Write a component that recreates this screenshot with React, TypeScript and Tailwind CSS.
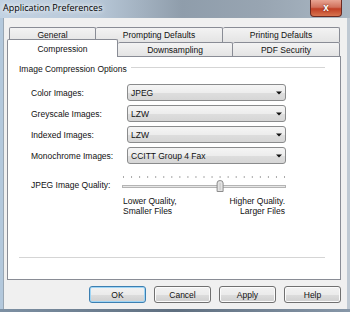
import React from 'react'

const rows = [
  { label: 'Color Images:', value: 'JPEG' },
  { label: 'Greyscale Images:', value: 'LZW' },
  { label: 'Indexed Images:', value: 'LZW' },
  { label: 'Monochrome Images:', value: 'CCITT Group 4 Fax' },
]

const backTabs = [
  { label: 'General', w: 'w-[87px]' },
  { label: 'Prompting Defaults', w: 'w-[127px]' },
  { label: 'Printing Defaults', w: 'w-[117px]' },
]

function Combo({ value }: { value: string }) {
  return (
    <div className="flex h-[17px] w-[159px] items-center justify-between rounded-[3px] border border-[#8a8b8c] bg-[linear-gradient(#f5f5f5_0%,#ededed_50%,#dedede_51%,#d6d6d6_100%)] pl-[3px] pr-[3px]">
      <span>{value}</span>
      <svg width="6" height="4" viewBox="0 0 6 4">
        <path d="M0 0.5h6L3 3.5z" fill="#111" />
      </svg>
    </div>
  )
}

// trackbar drawing, 21 ticks, thumb on 12
function Trackbar() {
  const ticks = Array.from({ length: 21 }, (_, i) => 1.5 + i * 8.05)
  const tx = ticks[12]
  return (
    <svg width="164" height="22" viewBox="0 0 164 22">
      {ticks.map((x, i) => (
        <rect key={i} x={x - 0.5} y={4} width={1} height={2} fill="#a9a9a9" />
      ))}
      <rect x={0.5} y={13.5} width={163} height={2} fill="#e6e6e6" stroke="#b4b4b4" strokeWidth={1} />
      <path
        d={`M${tx - 3} 19.5 V11 Q${tx - 3} 8.5 ${tx} 8.5 Q${tx + 3} 8.5 ${tx + 3} 11 V19.5 Z`}
        fill="#e3e3e3"
        stroke="#8c8c8c"
        strokeWidth={1}
      />
      <line x1={tx} y1={11} x2={tx} y2={18} stroke="#c4c4c4" strokeWidth={1} />
    </svg>
  )
}

function Button({ label, focused }: { label: string; focused?: boolean }) {
  return (
    <div
      className={
        focused
          ? 'flex h-[17px] w-[57px] items-center justify-center rounded-[3px] border border-[#3c7fb1] bg-[linear-gradient(#f2f2f2_0%,#ebebeb_50%,#dddddd_51%,#cfcfcf_100%)] shadow-[inset_0_0_0_1px_#9fd5f5]'
          : 'flex h-[17px] w-[57px] items-center justify-center rounded-[3px] border border-[#707070] bg-[linear-gradient(#f2f2f2_0%,#ebebeb_50%,#dddddd_51%,#cfcfcf_100%)] shadow-[inset_0_0_0_1px_#fbfbfb]'
      }
    >
      {label}
    </div>
  )
}

export default function App() {
  return (
    <div className="flex h-[312px] w-[350px] flex-col overflow-hidden font-['Liberation_Sans',Arial,sans-serif] text-[8.5px] leading-[12px] text-[#111]">
      {/* title bar */}
      <div className="flex h-[18px] items-start justify-between bg-[linear-gradient(90deg,#c3d3e3_0%,#b7c7d7_28%,#8f9dab_52%,#98a5b2_75%,#aab7c3_100%)]">
        <span className="pl-[3px] pt-[2px] font-['Open_Sans','Liberation_Sans',sans-serif] text-[9px] text-black [text-shadow:0_0_4px_#fff,0_0_6px_#fff]">
          Application Preferences
        </span>
        <div className="mr-[8px] flex h-[17px] w-[32px] items-center justify-center rounded-b-[4px] border border-t-0 border-[#6b2a22] bg-[linear-gradient(#e8a493_0%,#d1715c_45%,#c13f25_55%,#d7744f_100%)] text-[10px] font-bold leading-none text-white [text-shadow:0_0_2px_#5a1a10]">
          x
        </div>
      </div>

      <div className="flex h-[291px]">
        <div className="w-[3px] bg-[#b3c8dc]" />
        <div className="flex w-[344px] flex-col border-l border-[#98a6b3] bg-[#f0f0f0] pl-[3px] pt-[9px]">
          {/* back tab row */}
          <div className="flex h-[15px] pl-[2px]">
            {backTabs.map((t, i) => (
              <div
                key={t.label}
                className={`${t.w} flex items-center justify-center rounded-t-[2px] border-t border-r border-[#898c95] bg-[linear-gradient(#f3f3f3,#e4e4e4)] ${i === 0 ? 'border-l' : ''}`}
              >
                {t.label}
              </div>
            ))}
          </div>
          {/* front tab row */}
          <div className="flex h-[14px]">
            <div className="relative z-10 -mt-[3px] flex h-[18px] w-[111px] items-center justify-center rounded-t-[2px] border border-b-0 border-[#898c95] bg-white">
              Compression
            </div>
            <div className="flex h-[14px] w-[115px] items-center justify-center rounded-t-[2px] border-t border-r border-[#898c95] bg-[linear-gradient(#f3f3f3,#e4e4e4)]">
              Downsampling
            </div>
            <div className="flex h-[14px] w-[107px] items-center justify-center rounded-t-[2px] border-t border-r border-[#898c95] bg-[linear-gradient(#f3f3f3,#e4e4e4)]">
              PDF Security
            </div>
          </div>

          {/* panel */}
          <div className="h-[224px] w-[334px] border border-[#898c95] bg-white pt-[6px] pl-[11px]">
            <div className="h-[195px] w-[306px] border-b border-[#d5d5d5]">
              <div className="flex h-[12px] items-center">
                <span>Image Compression Options</span>
                <div className="ml-[4px] -mt-[3px] h-px flex-1 bg-[#d5d5d5]" />
              </div>
              <div className="mt-[9px] flex flex-col gap-[4px] pl-[12px]">
                {rows.map((r) => (
                  <div key={r.label} className="flex h-[17px] items-center">
                    <span className="w-[96px]">{r.label}</span>
                    <Combo value={r.value} />
                  </div>
                ))}
              </div>
              <div className="mt-[8px] flex pl-[12px]">
                <span className="w-[91px] pt-[7px]">JPEG Image Quality:</span>
                <div className="flex w-[164px] flex-col">
                  <Trackbar />
                  <div className="mt-[2px] flex justify-between px-px leading-[10px]">
                    <span>
                      Lower Quality,
                      <br />
                      Smaller Files
                    </span>
                    <span className="text-right">
                      Higher Quality.
                      <br />
                      Larger Files
                    </span>
                  </div>
                </div>
              </div>
            </div>
          </div>

          {/* buttons */}
          <div className="mt-[6px] flex justify-end gap-[8px] pr-[6px]">
            <Button label="OK" focused />
            <Button label="Cancel" />
            <Button label="Apply" />
            <Button label="Help" />
          </div>
        </div>
        <div className="w-[3px] bg-[#bfc9d3]" />
      </div>
      <div className="h-[3px] bg-[linear-gradient(90deg,#7d90a3,#5f6f80,#8797a8)]" />
    </div>
  )
}
